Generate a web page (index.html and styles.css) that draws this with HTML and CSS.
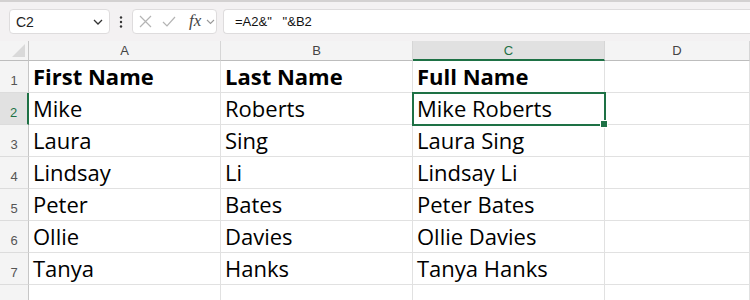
FILE: index.html
```html
<!DOCTYPE html>
<html lang="en">
    <head>
        <meta charset="UTF-8">
        <title>Book1 - Excel</title>
        <link rel="stylesheet" href="styles.css">
    </head>
    <body>
        <div class="toolbar">
            <div class="name-box">
                <span>C2</span>
                <svg width="10" height="6" viewBox="0 0 10 6"><path d="M1 1l4 4 4-4" fill="none" stroke="#333" stroke-width="1.3"/></svg>
            </div>
            <div class="more">
                <svg width="4" height="12" viewBox="0 0 4 12"><circle cx="2" cy="1.5" r="1.2" fill="#333"/><circle cx="2" cy="6" r="1.2" fill="#333"/><circle cx="2" cy="10.5" r="1.2" fill="#333"/></svg>
            </div>
            <div class="fx-group">
                <svg class="cancel" width="13" height="13" viewBox="0 0 13 13"><path d="M1 1l11 11M12 1L1 12" stroke="#b4b4b4" stroke-width="1.2"/></svg>
                <svg class="enter" width="14" height="11" viewBox="0 0 14 11"><path d="M1 6l4 4 8-9" fill="none" stroke="#b4b4b4" stroke-width="1.2"/></svg>
                <span class="fx">fx</span>
                <svg width="9" height="6" viewBox="0 0 9 6"><path d="M1 1l3.5 3.5L8 1" fill="none" stroke="#999" stroke-width="1.1"/></svg>
            </div>
            <div class="formula">=A2&amp;"   "&amp;B2</div>
        </div>
        <div class="sheet">
            <div class="corner"><span class="tri"></span></div>
            <div class="ch">A</div>
            <div class="ch">B</div>
            <div class="ch ch-active">C</div>
            <div class="ch">D</div>

            <div class="rh">1</div>
            <div class="cell bold">First Name</div>
            <div class="cell bold">Last Name</div>
            <div class="cell bold">Full Name</div>
            <div class="cell"></div>

            <div class="rh rh-active">2</div>
            <div class="cell">Mike</div>
            <div class="cell">Roberts</div>
            <div class="cell selected">Mike Roberts<span class="handle"></span></div>
            <div class="cell"></div>

            <div class="rh">3</div>
            <div class="cell">Laura</div>
            <div class="cell">Sing</div>
            <div class="cell">Laura Sing</div>
            <div class="cell"></div>

            <div class="rh">4</div>
            <div class="cell">Lindsay</div>
            <div class="cell">Li</div>
            <div class="cell">Lindsay Li</div>
            <div class="cell"></div>

            <div class="rh">5</div>
            <div class="cell">Peter</div>
            <div class="cell">Bates</div>
            <div class="cell">Peter Bates</div>
            <div class="cell"></div>

            <div class="rh">6</div>
            <div class="cell">Ollie</div>
            <div class="cell">Davies</div>
            <div class="cell">Ollie Davies</div>
            <div class="cell"></div>

            <div class="rh">7</div>
            <div class="cell">Tanya</div>
            <div class="cell">Hanks</div>
            <div class="cell">Tanya Hanks</div>
            <div class="cell"></div>

            <div class="rh">8</div>
            <div class="cell"></div>
            <div class="cell"></div>
            <div class="cell"></div>
            <div class="cell"></div>
        </div>
    </body>
</html>
```

FILE: styles.css
```css
body {
    margin:      0;
    padding:     0;
    overflow:    hidden;
    font-family: "Liberation Sans", Arial, sans-serif;
    background:  white;
}

.toolbar {
    height:           41px;
    box-sizing:       border-box;
    border-top:       2px solid #d3d1d1;
    background-color: #f3f1f2;
    display:          flex;
    align-items:      flex-start;
    padding:          7px 0 0 9px;
}

.name-box,
.fx-group,
.formula {
    height:           25px;
    box-sizing:       border-box;
    background-color: white;
    border:           1px solid #dedcdd;
    border-radius:    4px;
    display:          flex;
    align-items:      center;
}

.name-box {
    width:           101px;
    padding:         0 6px 0 6px;
    justify-content: space-between;
    font-size:       14px;
    color:           #222;
}

.more {
    width:           22px;
    height:          25px;
    display:         flex;
    align-items:     center;
    justify-content: center;
}

.fx-group {
    width:   85px;
    padding: 0 0 0 6px;
    gap:     0;
}

.fx-group .cancel {
    margin-right: 10px;
}

.fx-group .enter {
    margin-right: 13px;
}

.fx {
    font-family:  "Liberation Serif", "Times New Roman", serif;
    font-style:   italic;
    font-size:    17px;
    color:        #444;
    margin-right: 5px;
    margin-top:   -2px;
}

.formula {
    flex-grow:     1;
    margin-left:   6px;
    border-right:  0;
    border-radius: 4px 0 0 4px;
    padding-left:  11px;
    font-size:     13px;
    white-space:   pre;
    color:         #111;
}

.sheet {
    display:               grid;
    grid-template-columns: 29px 192px 192px 192px 1fr;
    grid-template-rows:    20px repeat(8, 32px);
}

.corner,
.ch,
.rh {
    box-sizing:       border-box;
    background-color: #f4f4f4;
    color:            #444;
    font-size:        13px;
}

.corner {
    position:      relative;
    border-right:  1px solid #c6c6c6;
    border-bottom: 1px solid #bdbdbd;
}

.corner .tri {
    position:     absolute;
    right:        3px;
    bottom:       3px;
    width:        0;
    height:       0;
    border-left:  13px solid transparent;
    border-bottom: 13px solid #d9d9d9;
}

.ch {
    border-right:  1px solid #d6d6d6;
    border-bottom: 1px solid #bdbdbd;
    text-align:    center;
    line-height:   20px;
}

.ch-active {
    background-color: #e1e1e1;
    color:            #1e7145;
    border-bottom:    2px solid #1e7145;
}

.rh {
    border-right:  1px solid #c6c6c6;
    border-bottom: 1px solid #dcdcdc;
    text-align:    center;
    padding-top:   13px;
    line-height:   14px;
    color:         #555;
}

.rh-active {
    background-color: #e1e1e1;
    color:            #1e7145;
    border-right:     2px solid #1e7145;
}

.cell {
    box-sizing:    border-box;
    border-right:  1px solid #e1e1e1;
    border-bottom: 1px solid #e1e1e1;
    font-family:   "Open Sans", sans-serif;
    font-size:     22px;
    line-height:   31px;
    padding-left:  4px;
    white-space:   nowrap;
    color:         #000;
}

.cell.bold {
    font-weight: bold;
}

.cell.selected {
    position: relative;
}

.cell.selected::after {
    content:    "";
    position:   absolute;
    left:       -1px;
    top:        -1px;
    right:      -2px;
    bottom:     -2px;
    border:     2px solid #1e7145;
}

.handle {
    position:         absolute;
    right:            -4px;
    bottom:           -4px;
    width:            6px;
    height:           6px;
    background-color: #1e7145;
    border:           1px solid white;
    z-index:          2;
}
```
